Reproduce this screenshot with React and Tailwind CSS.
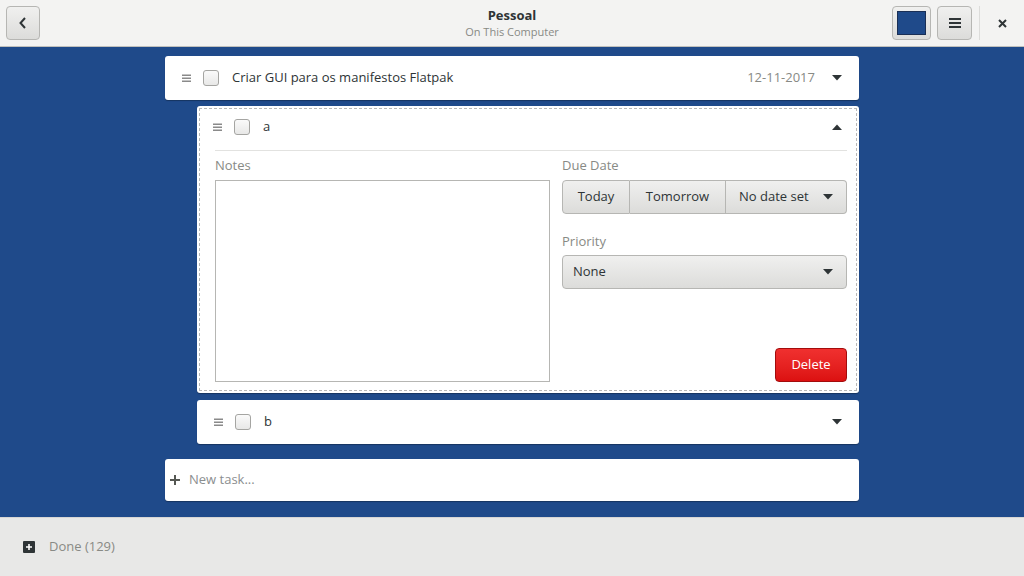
import { useState } from "react";

const Handle = () => (
    <svg width="9" height="9" viewBox="0 0 9 9" className="shrink-0">
        <rect x="0" y="0.5" width="9" height="1.5" fill="#8a8a8a" />
        <rect x="0" y="3.5" width="9" height="1.5" fill="#8a8a8a" />
        <rect x="0" y="6.5" width="9" height="1.5" fill="#8a8a8a" />
    </svg>
);

const Check = () => (
    <div className="w-4 h-4 shrink-0 rounded-[3px] border border-[#a5a5a2] bg-gradient-to-b from-[#fafafa] to-[#e8e8e7]" />
);

const Caret = ({ up }) => (
    <svg width="10" height="6" viewBox="0 0 10 6" className="shrink-0">
        {up ? <path d="M0 6 L5 0.5 L10 6 Z" fill="#2e3436" /> : <path d="M0 0 L10 0 L5 5.5 Z" fill="#2e3436" />}
    </svg>
);

const btn = "bg-gradient-to-b from-[#f0f0ef] to-[#dcdcda] border border-[#b6b6b3] text-[#2e3436]";

const TaskRow = ({ title, date }) => (
    <div className="h-11 flex items-center pl-[17px] pr-[17px]">
        <Handle />
        <div className="ml-[12px]"><Check /></div>
        <span className="ml-[13px] text-[13px] text-[#2e3436]">{title}</span>
        <div className="flex-1" />
        {date && <span className="text-[13px] text-[#888a85] mr-[17px]">{date}</span>}
        <Caret />
    </div>
);

const App = () => {
    const [notes, setNotes] = useState("");

    return (
        <div className="w-[1024px] h-[576px] flex flex-col overflow-hidden" style={{ fontFamily: "'Open Sans', 'Noto Sans', sans-serif" }}>
            {/* header */}
            <div className="h-[47px] shrink-0 bg-[#f3f3f2] border-b border-[#c0c0bd] flex items-center pl-[6px] relative">
                <button className={`w-[34px] h-[34px] rounded-[4px] flex items-center justify-center ${btn}`}>
                    <svg width="10" height="12" viewBox="0 0 10 12"><path d="M7 1 L2.5 6 L7 11" stroke="#2e3436" strokeWidth="2" fill="none" /></svg>
                </button>
                <div className="absolute left-0 right-0 top-[6px] flex flex-col items-center pointer-events-none">
                    <span className="text-[13px] font-bold text-[#2e3436] leading-[18px]">Pessoal</span>
                    <span className="text-[11px] text-[#888a85] leading-[15px]">On This Computer</span>
                </div>
                <div className="flex-1" />
                <button className={`w-[39px] h-[34px] rounded-[4px] flex items-center justify-center ${btn}`}>
                    <div className="w-[29px] h-[24px] bg-[#1f4a8a] border border-[#1a2f55]" />
                </button>
                <button className={`ml-[6px] w-[35px] h-[34px] rounded-[4px] flex items-center justify-center ${btn}`}>
                    <svg width="12" height="10" viewBox="0 0 12 10">
                        <rect x="0" y="0" width="12" height="2" fill="#2e3436" />
                        <rect x="0" y="4" width="12" height="2" fill="#2e3436" />
                        <rect x="0" y="8" width="12" height="2" fill="#2e3436" />
                    </svg>
                </button>
                <div className="ml-[7px] w-px h-[34px] bg-[#dcdcda]" />
                <div className="w-[44px] h-[34px] flex items-center justify-center">
                    <svg width="9" height="9" viewBox="0 0 9 9"><path d="M1 1 L8 8 M8 1 L1 8" stroke="#2e3436" strokeWidth="2" /></svg>
                </div>
            </div>

            {/* list */}
            <div className="flex-1 bg-[#1f4a8a] pt-[9px] flex flex-col items-center">
                <div className="w-[694px] flex flex-col">
                    <div className="bg-white rounded-[3px] shadow-[0_1px_1px_rgba(0,0,0,0.3)]">
                        <TaskRow title="Criar GUI para os manifestos Flatpak" date="12-11-2017" />
                    </div>

                    <div className="ml-8 mt-[6px] bg-white rounded-[3px] p-[2px] shadow-[0_1px_1px_rgba(0,0,0,0.3)]">
                        <div className="border border-dashed border-[#b8b8b8] h-[283px] flex flex-col">
                            <div className="h-[36px] mb-[5px] flex items-center pl-[13px] pr-[14px]">
                                <Handle />
                                <div className="ml-[12px]"><Check /></div>
                                <span className="ml-[13px] text-[13px] text-[#2e3436]">a</span>
                                <div className="flex-1" />
                                <Caret up />
                            </div>
                            <div className="ml-[15px] mr-[9px] h-px bg-[#e2e2e0]" />
                            <div className="flex pl-[15px] pr-[9px] pt-[5px] gap-3">
                                <div className="flex flex-col w-[335px]">
                                    <span className="text-[13px] text-[#888a85] leading-[18px]">Notes</span>
                                    <textarea
                                        value={notes}
                                        onChange={(e) => setNotes(e.target.value)}
                                        className="mt-[6px] h-[202px] border border-[#b6b6b3] resize-none outline-none"
                                    />
                                </div>
                                <div className="flex flex-col flex-1">
                                    <span className="text-[13px] text-[#888a85] leading-[18px]">Due Date</span>
                                    <div className="mt-[6px] flex h-[34px] text-[13px]">
                                        <button className={`w-[68px] rounded-l-[4px] ${btn}`}>Today</button>
                                        <button className={`w-[96px] border-l-0 ${btn}`}>Tomorrow</button>
                                        <button className={`flex-1 rounded-r-[4px] border-l-0 flex items-center pl-[13px] pr-[13px] ${btn}`}>
                                            <span>No date set</span>
                                            <div className="flex-1" />
                                            <Caret />
                                        </button>
                                    </div>
                                    <span className="mt-[18px] text-[13px] text-[#888a85] leading-[18px]">Priority</span>
                                    <button className={`mt-[5px] h-[34px] rounded-[4px] flex items-center pl-[10px] pr-[13px] text-[13px] ${btn}`}>
                                        <span>None</span>
                                        <div className="flex-1" />
                                        <Caret />
                                    </button>
                                    <div className="flex justify-end mt-[59px]">
                                        <button className="w-[72px] h-[34px] rounded-[4px] text-[13px] text-white border border-[#a30c0c] bg-gradient-to-b from-[#f0302f] to-[#dc1010]">
                                            Delete
                                        </button>
                                    </div>
                                </div>
                            </div>
                        </div>
                    </div>

                    <div className="ml-8 mt-[7px] bg-white rounded-[3px] shadow-[0_1px_1px_rgba(0,0,0,0.3)]">
                        <TaskRow title="b" />
                    </div>

                    <div className="mt-[15px] h-[42px] bg-white rounded-[3px] flex items-center pl-[5px] shadow-[0_1px_1px_rgba(0,0,0,0.3)]">
                        <svg width="10" height="10" viewBox="0 0 10 10"><path d="M5 0 V10 M0 5 H10" stroke="#555753" strokeWidth="2" /></svg>
                        <span className="ml-[9px] text-[13px] text-[#8b8e8f]">New task...</span>
                    </div>
                </div>
            </div>

            {/* footer */}
            <div className="h-[59px] shrink-0 bg-[#e8e8e7] flex items-center pl-[23px] border-t border-[#d6d6d4]">
                <div className="w-3 h-3 bg-[#2e3436] rounded-[1px] flex items-center justify-center">
                    <svg width="6" height="6" viewBox="0 0 6 6"><path d="M3 0 V6 M0 3 H6" stroke="white" strokeWidth="1.6" /></svg>
                </div>
                <span className="ml-[14px] text-[13px] text-[#888a85]">Done (129)</span>
            </div>
        </div>
    );
};

export default App;
